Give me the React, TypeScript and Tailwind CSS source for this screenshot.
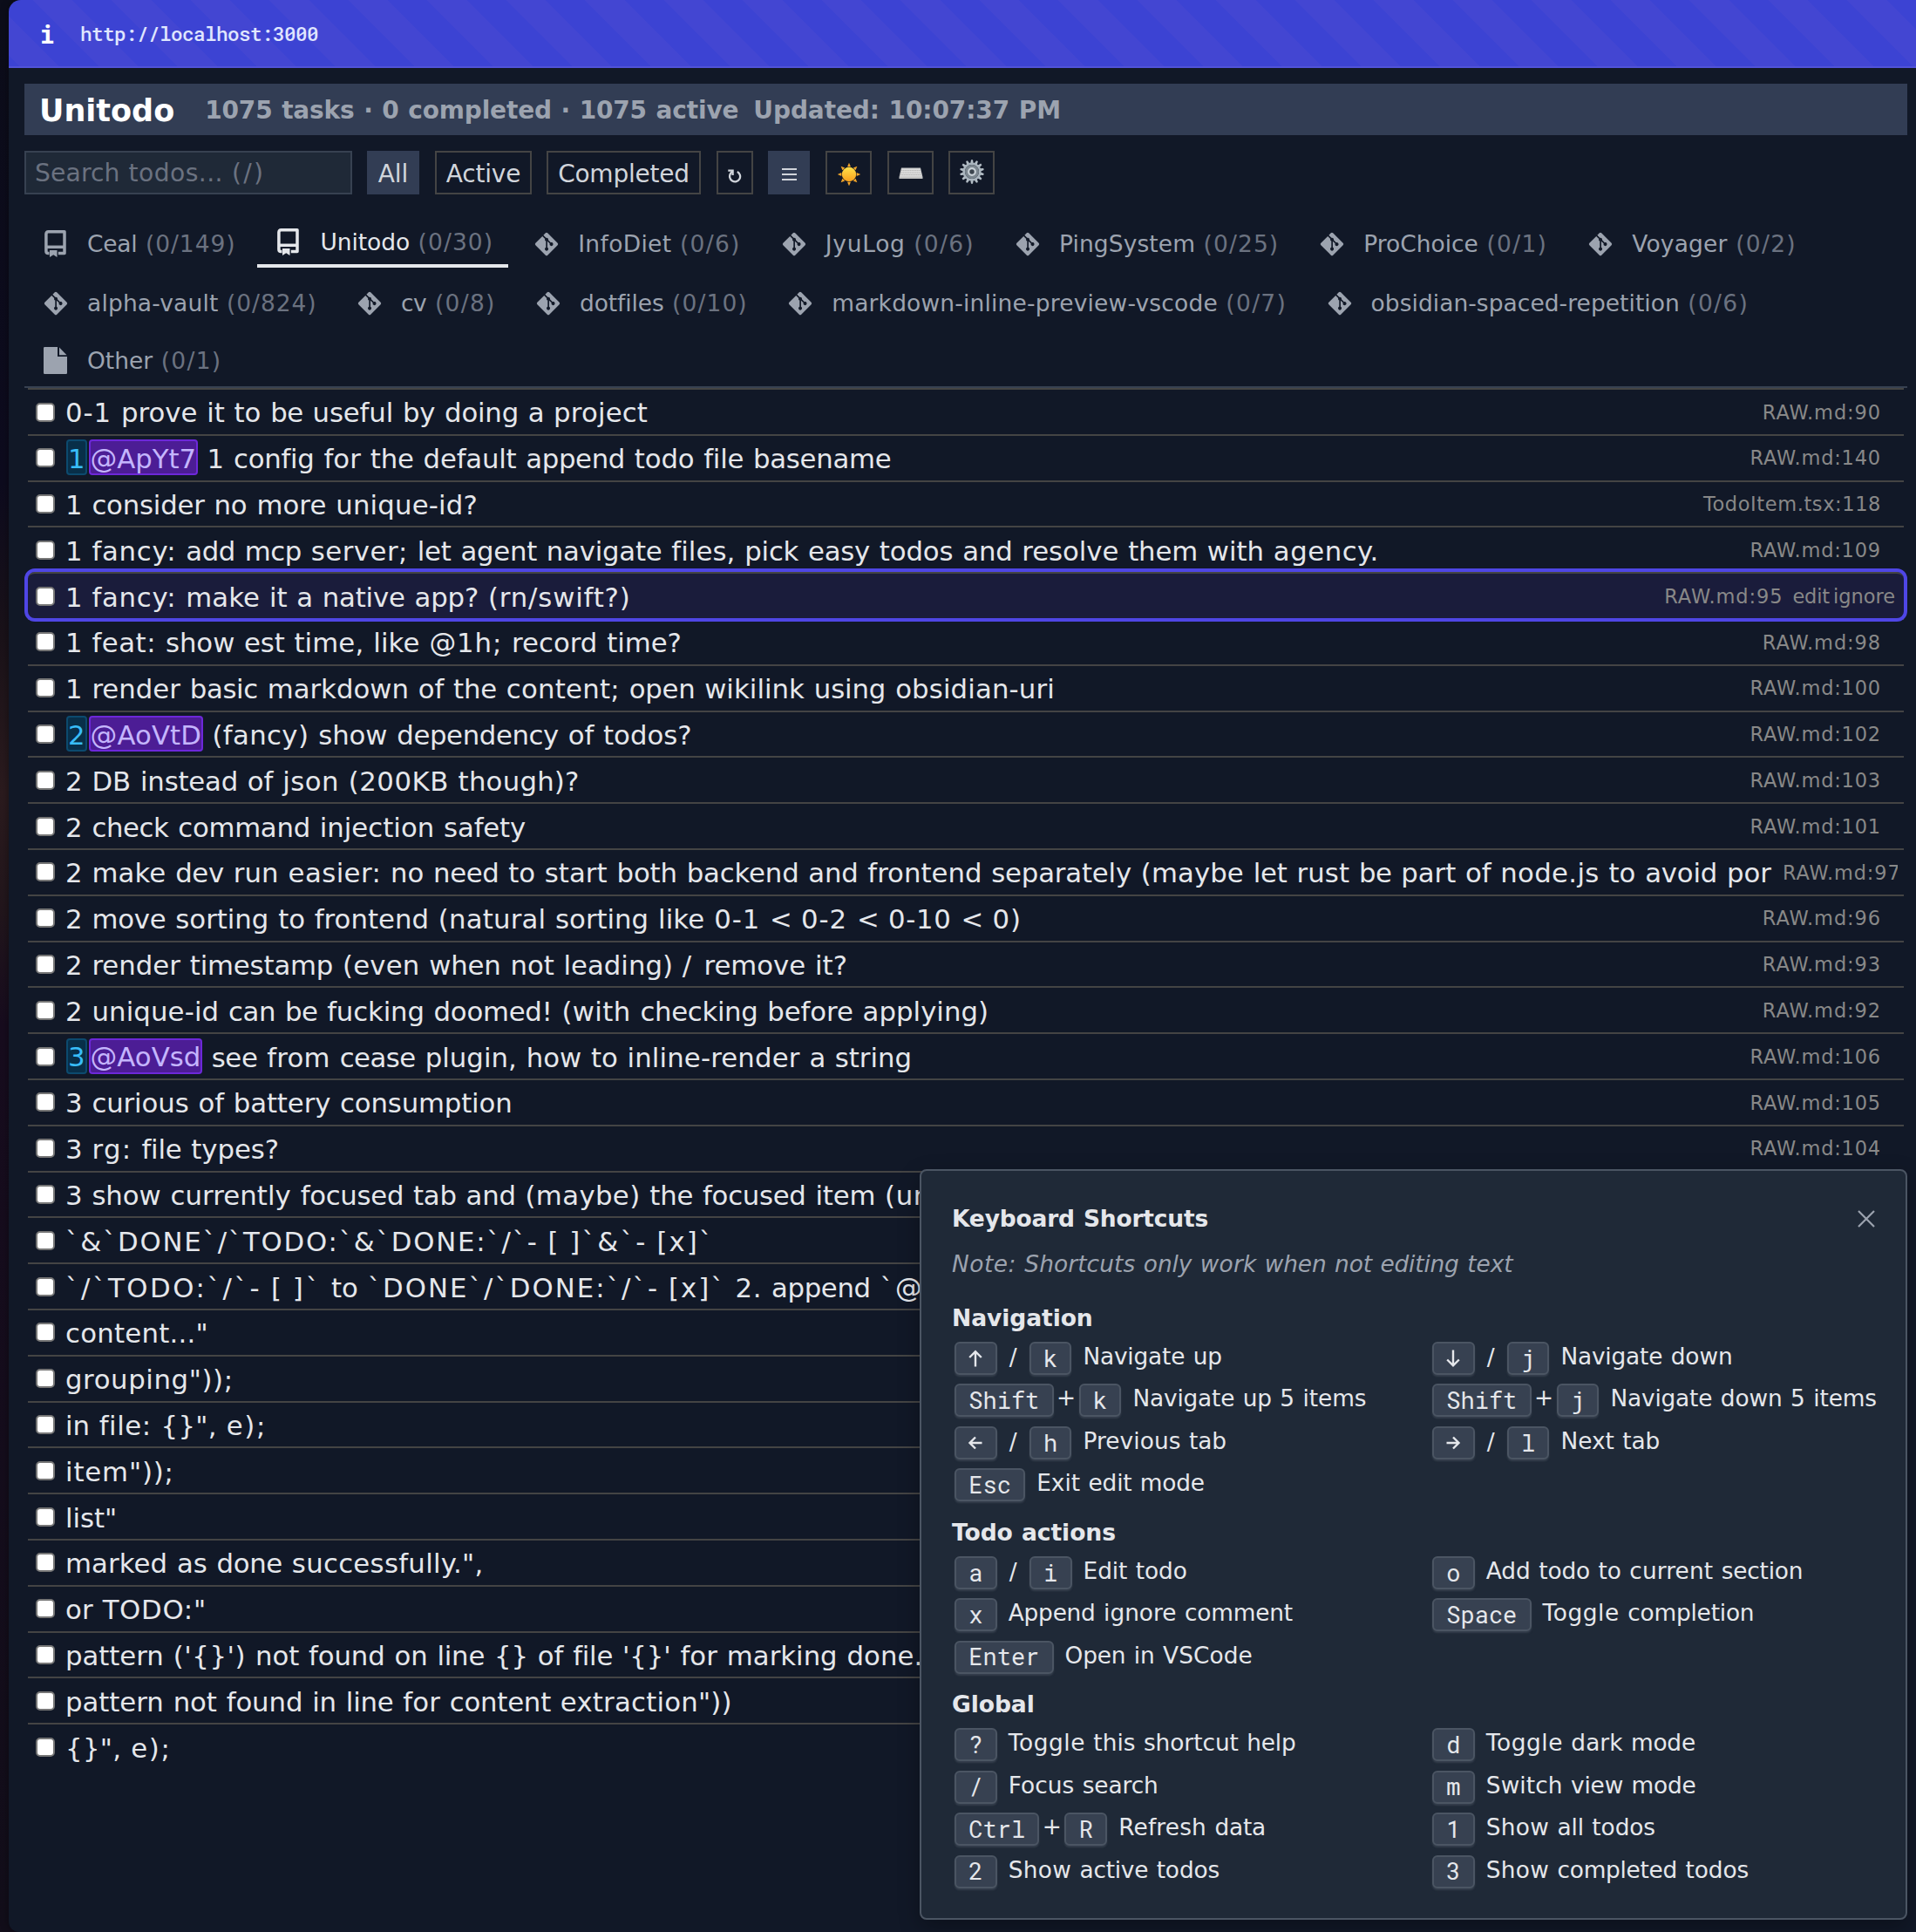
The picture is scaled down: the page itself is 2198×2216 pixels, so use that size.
import React, { useMemo } from "react";
import { FaGitAlt } from "react-icons/fa";

/** Advance widths of the interface face, in thousandths of an em. */
const ADV: Record<string, number> = {
  "!": 394, '"': 459, "&": 727, "'": 269, "(": 454, ")": 454, "+": 818, ",": 364, "-": 454, ".": 364, "/": 454,
  "0": 636, "1": 636, "2": 636, "3": 636, "4": 636, "5": 636, "6": 636, "7": 636, "8": 636, "9": 636,
  ":": 454, ";": 454, "<": 818, "?": 545, "@": 1000,
  A: 684, B: 686, C: 698, D: 771, E: 632, F: 575, G: 775, H: 751, I: 421, J: 455, K: 693, L: 557, M: 843,
  N: 748, O: 787, P: 603, Q: 787, R: 695, S: 684, T: 616, U: 732, V: 684, W: 989, X: 685, Y: 615, Z: 685,
  "[": 454, "]": 454, "`": 636,
  a: 601, b: 623, c: 521, d: 623, e: 596, f: 352, g: 623, h: 633, i: 274, j: 344, k: 592, l: 274, m: 973,
  n: 633, o: 607, p: 623, q: 623, r: 427, s: 521, t: 394, u: 633, v: 592, w: 818, x: 592, y: 592, z: 525,
  "{": 635, "}": 635,
};

let ctx: CanvasRenderingContext2D | null = null;
function fallbackWidth(word: string) {
  ctx = ctx ?? document.createElement("canvas").getContext("2d");
  if (!ctx) return 0;
  ctx.font = "100px 'DejaVu Sans'";
  return ctx.measureText(word).width / 100;
}

/** Text whose words keep the interface face's widths when the fallback face is in use. */
function Words({ children, className }: { children: string; className?: string }) {
  const parts = useMemo(
    () =>
      children.split(" ").map((word) => {
        const target = [...word].reduce((sum, ch) => sum + (ADV[ch] ?? 600), 0) / 1000;
        const spacing = word.length ? (target - fallbackWidth(word)) / word.length : 0;
        return { word, spacing: `${spacing.toFixed(4)}em` };
      }),
    [children],
  );
  return (
    <span className={className}>
      {parts.map((p, i) => (
        <React.Fragment key={i}>
          {i > 0 && " "}
          <span style={{ letterSpacing: p.spacing }}>{p.word}</span>
        </React.Fragment>
      ))}
    </span>
  );
}

type Todo = { text: string; loc?: string; prio?: string; id?: string; focused?: boolean; clipped?: boolean };

const todos: Todo[] = [
  { text: "0-1 prove it to be useful by doing a project", loc: "RAW.md:90" },
  { text: "1 config for the default append todo file basename", loc: "RAW.md:140", prio: "1", id: "@ApYt7" },
  { text: "1 consider no more unique-id?", loc: "TodoItem.tsx:118" },
  { text: "1 fancy: add mcp server; let agent navigate files, pick easy todos and resolve them with agency.", loc: "RAW.md:109" },
  { text: "1 fancy: make it a native app? (rn/swift?)", loc: "RAW.md:95", focused: true },
  { text: "1 feat: show est time, like @1h; record time?", loc: "RAW.md:98" },
  { text: "1 render basic markdown of the content; open wikilink using obsidian-uri", loc: "RAW.md:100" },
  { text: "(fancy) show dependency of todos?", loc: "RAW.md:102", prio: "2", id: "@AoVtD" },
  { text: "2 DB instead of json (200KB though)?", loc: "RAW.md:103" },
  { text: "2 check command injection safety", loc: "RAW.md:101" },
  { text: "2 make dev run easier: no need to start both backend and frontend separately (maybe let rust be part of node.js to avoid por", loc: "RAW.md:97", clipped: true },
  { text: "2 move sorting to frontend (natural sorting like 0-1 < 0-2 < 0-10 < 0)", loc: "RAW.md:96" },
  { text: "2 render timestamp (even when not leading) / remove it?", loc: "RAW.md:93" },
  { text: "2 unique-id can be fucking doomed! (with checking before applying)", loc: "RAW.md:92" },
  { text: "see from cease plugin, how to inline-render a string", loc: "RAW.md:106", prio: "3", id: "@AoVsd" },
  { text: "3 curious of battery consumption", loc: "RAW.md:105" },
  { text: "3 rg: file types?", loc: "RAW.md:104" },
  { text: "3 show currently focused tab and (maybe) the focused item (un" },
  { text: "`&`DONE`/`TODO:`&`DONE:`/`- [ ]`&`- [x]`" },
  { text: "`/`TODO:`/`- [ ]` to `DONE`/`DONE:`/`- [x]` 2. append `@" },
  { text: 'content..."' },
  { text: 'grouping"));' },
  { text: 'in file: {}", e);' },
  { text: 'item"));' },
  { text: 'list"' },
  { text: 'marked as done successfully.",' },
  { text: 'or TODO:"' },
  { text: "pattern ('{}') not found on line {} of file '{}' for marking done." },
  { text: 'pattern not found in line for content extraction"))' },
  { text: '{}", e);' },
];

type TabInfo = { name: string; count: string; icon: "repo" | "git" | "file"; active?: boolean };

const tabRows: TabInfo[][] = [
  [
    { name: "Ceal", count: "(0/149)", icon: "repo" },
    { name: "Unitodo", count: "(0/30)", icon: "repo", active: true },
    { name: "InfoDiet", count: "(0/6)", icon: "git" },
    { name: "JyuLog", count: "(0/6)", icon: "git" },
    { name: "PingSystem", count: "(0/25)", icon: "git" },
    { name: "ProChoice", count: "(0/1)", icon: "git" },
    { name: "Voyager", count: "(0/2)", icon: "git" },
  ],
  [
    { name: "alpha-vault", count: "(0/824)", icon: "git" },
    { name: "cv", count: "(0/8)", icon: "git" },
    { name: "dotfiles", count: "(0/10)", icon: "git" },
    { name: "markdown-inline-preview-vscode", count: "(0/7)", icon: "git" },
    { name: "obsidian-spaced-repetition", count: "(0/6)", icon: "git" },
  ],
  [{ name: "Other", count: "(0/1)", icon: "file" }],
];

function RepoIcon() {
  return (
    <svg viewBox="0 0 25 31" className="h-[31px] w-[25px]" fill="none" stroke="currentColor" strokeWidth="3.500">
      <path d="M5.500 26.600H4.500Q1.900 26.600 1.900 24V4.400Q1.900 1.800 4.500 1.800H23V26.600H15.800" strokeLinejoin="round" />
      <path d="M2 19.300H23" />
      <path d="M6 23H14.500V31L10.250 28.200L6 31Z" fill="currentColor" stroke="none" />
    </svg>
  );
}

function FileIcon() {
  return (
    <svg viewBox="0 0 27 31" className="h-[31px] w-[27px]" fill="currentColor">
      <path d="M1.200 0H16V11H27V29.800Q27 31 25.800 31H1.200Q0 31 0 29.800V1.200Q0 0 1.200 0Z" />
      <path d="M18 0.600L26.500 9.200H18Z" />
    </svg>
  );
}

function TabIcon({ kind }: { kind: TabInfo["icon"] }) {
  return (
    <span className="mr-[3px] flex w-[36px] justify-center">
      {kind === "repo" && <RepoIcon />}
      {kind === "git" && <FaGitAlt className="ml-[2px] size-[30px]" />}
      {kind === "file" && <FileIcon />}
    </span>
  );
}

function Tab({ tab }: { tab: TabInfo }) {
  return (
    <div
      className={
        tab.active
          ? "flex h-[55px] items-center gap-4 border-b-4 border-[#e5e7eb] px-[17px] text-[#e5e7eb]"
          : "flex h-[55px] items-center gap-4 px-[17px] text-[#9ca3af]"
      }
    >
      <TabIcon kind={tab.icon} />
      <span className="whitespace-nowrap">
        <Words>{tab.name}</Words> <Words className="text-[#6b7280]">{tab.count}</Words>
      </span>
    </div>
  );
}

function TodoRow({ todo }: { todo: Todo }) {
  return (
    <div
      className={
        todo.focused
          ? "relative z-10 flex h-[52.8px] items-start rounded-[8px] border-t-2 border-[#444] bg-[#1a1c3b] outline-4 outline-[#4f46e5]"
          : "flex h-[52.8px] items-start border-t-2 border-[#444]"
      }
    >
      <span className="mt-[14.500px] ml-[9px] size-[22px] shrink-0 rounded-[5px] border-2 border-[#767676] bg-white" />
      <div
        className={
          todo.clipped
            ? "ml-[12px] flex h-[50px] w-[1961px] shrink-0 items-center pt-[3px] whitespace-nowrap"
            : "ml-[12px] flex h-[50px] min-w-0 flex-1 items-center pt-[3px] whitespace-nowrap"
        }
      >
        {todo.id && (
          <>
            <span className="mb-[3px] ml-[1px] flex h-[41px] items-center rounded-[4px] border-2 border-[#0c4a6e] bg-[#082f49] pt-[2px] text-[#38bdf8]">{todo.prio}</span>
            <span className="mr-[10.500px] mb-[3px] ml-[2px] flex h-[41px] items-center rounded-[4px] border-2 border-[#6d28d9] bg-[#4c1d95] pt-[2px] text-[#c4b5fd]">
              <Words>{todo.id}</Words>
            </span>
          </>
        )}
        <Words>{todo.text}</Words>
      </div>
      {todo.loc && (
        <div
          className={
            todo.focused
              ? "flex h-[50px] items-center pt-[3px] pr-[10px] text-[22.500px] text-[#888]"
              : todo.clipped
                ? "mr-[7px] ml-[9px] flex h-[50px] min-w-0 flex-1 items-center overflow-hidden pt-[3px] text-[22.400px] text-[#888]"
                : "flex h-[50px] items-center pt-[3px] pr-[26px] text-[22.500px] text-[#888]"
          }
        >
          <Words>{todo.loc}</Words>
          {todo.focused && (
            <>
              <Words className="ml-[11px]">edit</Words>
              <Words className="ml-[4px]">ignore</Words>
            </>
          )}
        </div>
      )}
    </div>
  );
}

type Shortcut = { keys: string[]; sep?: string; label: string };
type Group = { title: string; items: Shortcut[] };

const groups: Group[] = [
  {
    title: "Navigation",
    items: [
      { keys: ["↑", "k"], sep: "/", label: "Navigate up" },
      { keys: ["↓", "j"], sep: "/", label: "Navigate down" },
      { keys: ["Shift", "k"], sep: "+", label: "Navigate up 5 items" },
      { keys: ["Shift", "j"], sep: "+", label: "Navigate down 5 items" },
      { keys: ["←", "h"], sep: "/", label: "Previous tab" },
      { keys: ["→", "l"], sep: "/", label: "Next tab" },
      { keys: ["Esc"], label: "Exit edit mode" },
    ],
  },
  {
    title: "Todo actions",
    items: [
      { keys: ["a", "i"], sep: "/", label: "Edit todo" },
      { keys: ["o"], label: "Add todo to current section" },
      { keys: ["x"], label: "Append ignore comment" },
      { keys: ["Space"], label: "Toggle completion" },
      { keys: ["Enter"], label: "Open in VSCode" },
    ],
  },
  {
    title: "Global",
    items: [
      { keys: ["?"], label: "Toggle this shortcut help" },
      { keys: ["d"], label: "Toggle dark mode" },
      { keys: ["/"], label: "Focus search" },
      { keys: ["m"], label: "Switch view mode" },
      { keys: ["Ctrl", "R"], sep: "+", label: "Refresh data" },
      { keys: ["1"], label: "Show all todos" },
      { keys: ["2"], label: "Show active todos" },
      { keys: ["3"], label: "Show completed todos" },
    ],
  },
];

const arrowPaths: Record<string, string> = {
  "↑": "M8 18.500V1M1.200 8L8 1.200L14.800 8",
  "↓": "M8 -0.500V17M1.200 10.500L8 17.300L14.800 10.500",
  "←": "M15.500 9H2M8 2.500L1.500 9L8 15.500",
  "→": "M.5 9H14M8 2.500L14.500 9L8 15.500",
};

function Key({ label }: { label: string }) {
  return (
    <span className="mx-[3px] mt-[5px] flex h-[38px] items-center rounded-[6px] border-2 border-[#4b5563] bg-[#374151] px-[14.300px] font-['Roboto_Mono','DejaVu_Sans_Mono',monospace] text-[27px] [word-spacing:0] shadow-[0_2px_2px_rgba(75,85,99,0.5)]">
      {arrowPaths[label] ? (
        <svg viewBox="0 0 16 18" className="h-[18px] w-[16px] overflow-visible" fill="none" stroke="currentColor" strokeWidth="2.400">
          <path d={arrowPaths[label]} />
        </svg>
      ) : (
        label
      )}
    </span>
  );
}

function ShortcutItem({ item }: { item: Shortcut }) {
  return (
    <div className="flex h-[48.400px] items-start whitespace-nowrap">
      <Key label={item.keys[0]} />
      {item.keys[1] && (
        <>
          <span className={item.sep === "/" ? "mt-[5px] w-[31px] text-center leading-[36px]" : "mt-[3px] w-[23px] text-center leading-[36px]"}>{item.sep}</span>
          <Key label={item.keys[1]} />
        </>
      )}
      <Words className="ml-[10px] leading-[43px]">{item.label}</Words>
    </div>
  );
}

function ShortcutsPanel() {
  return (
    <div className="absolute top-[1341px] left-[1055px] z-20 h-[861px] w-[1133px] rounded-[8px] border-2 border-[#4b5563] bg-[#1f2937] pr-[34px] pl-[35px] text-[26.400px] text-[#e5e7eb] shadow-[0_8px_24px_rgba(0,0,0,0.3)]">
      <div className="mt-[36px] flex h-[38px] items-center justify-between">
        <h2 className="text-[26.500px] font-bold tracking-[-0.2px]">Keyboard Shortcuts</h2>
        <svg viewBox="0 0 20 20" className="mr-[1px] size-[20px] text-[#9ca3af]" fill="none" stroke="currentColor" strokeWidth="2.200">
          <path d="M1 1l18 18M19 1L1 19" />
        </svg>
      </div>
      <p className="mt-[14px] h-[38px] leading-[38px] text-[#9ca3af] italic">
        <Words>Note: Shortcuts only work when not editing text</Words>
      </p>
      <div className="pt-[22px]">
        {groups.map((g) => (
          <section key={g.title} className="mb-[9.300px]">
            <h3 className="h-[43px] text-[26.600px] leading-[42px] font-bold tracking-[-0.1px]">{g.title}</h3>
            <div className="grid grid-cols-[548px_1fr]">
              {g.items.map((it) => (
                <ShortcutItem key={it.label} item={it} />
              ))}
            </div>
          </section>
        ))}
      </div>
    </div>
  );
}

function RefreshIcon() {
  return (
    <svg viewBox="0 0 16 16" className="size-[16px]" fill="none" stroke="currentColor" strokeWidth="2.300">
      <path d="M10.800 3A6 6 0 1 1 3 5.200L5.400 1.800" />
      <path d="M0.300 1.700H5.600V7" />
    </svg>
  );
}

function SunIcon() {
  return (
    <svg viewBox="0 0 28 28" className="size-[28px]">
      <g fill="#f3a52a">
        {[0, 45, 90, 135, 180, 225, 270, 315].map((a) => (
          <path key={a} d="M14 0.800L16 5.300H12Z" transform={`rotate(${a} 14 14)`} />
        ))}
      </g>
      <circle cx="14" cy="14" r="8.200" fill="url(#sun)" />
      <defs>
        <linearGradient id="sun" x1="0" y1="0" x2="0" y2="1">
          <stop offset="0" stopColor="#ffe14a" />
          <stop offset="1" stopColor="#f9a01b" />
        </linearGradient>
      </defs>
    </svg>
  );
}

function KeyboardIcon() {
  return (
    <svg viewBox="0 0 28 14" className="h-[14px] w-[28px]">
      <path d="M3 0.500H25L27.500 11V13H0.500V11Z" fill="#c4c4c4" />
      <path d="M3.500 1.500H24.500L26.300 10.500H1.700Z" fill="#dcdcdc" />
      <path d="M3 3.500H25M2.500 6H25.500M2 8.500H26" stroke="#b0b0b0" strokeWidth="0.8" strokeDasharray="1.500 0.5" />
    </svg>
  );
}

function GearIcon() {
  return (
    <svg viewBox="0 0 28 28" className="size-[28px]">
      <g fill="#b3bdc5">
        {Array.from({ length: 14 }, (_, i) => (
          <path key={i} d="M13 0.200H15L15.800 5H12.200Z" transform={`rotate(${(i * 360) / 14} 14 14)`} />
        ))}
      </g>
      <circle cx="14" cy="14" r="9.300" fill="none" stroke="#a9b4bd" strokeWidth="2.600" />
      <circle cx="14" cy="14" r="8" fill="#7b868f" />
      <circle cx="14" cy="14" r="3.800" fill="#3b444d" stroke="#c8d0d6" strokeWidth="2.200" />
    </svg>
  );
}

export default function App() {
  return (
    <div className="relative h-[2216px] w-[2198px] overflow-hidden bg-[linear-gradient(180deg,#0c0d1a_0%,#0d0b1e_25%,#1a1219_33%,#2b1b1e_41%,#22161c_47%,#170c1e_53%,#120e1a_100%)] pl-[10px] font-['DejaVu_Sans',sans-serif] text-[30.750px] text-[#e5e7eb] [word-spacing:0.034em]">
      <div className="h-full overflow-hidden rounded-tl-[14px] rounded-bl-[12px] bg-[#111827] shadow-[0_0_10px_rgba(0,0,0,0.4)]">
        <div className="flex h-[78px] items-center border-b-2 border-[#5153d8] bg-[repeating-linear-gradient(45deg,#3c43d3_0px,#3c43d3_9px,#4346d2_9px,#4346d2_41px,#3c43d3_41px,#3c43d3_64px)] font-['Roboto_Mono','DejaVu_Sans_Mono',monospace] text-[22.700px] font-medium text-indigo-100 [word-spacing:0]">
          <span className="ml-[35px] text-[30px] font-bold text-white">i</span>
          <span className="ml-[29px] tracking-[-0.62px]">http://localhost:3000</span>
        </div>
        <div className="pt-[18px] pr-[10px] pl-[18px]">
          <header className="flex h-[59px] items-center bg-[#323d54] pt-[3px] pl-[17px] font-bold whitespace-nowrap">
            <h1 className="text-[35px] text-white">Unitodo</h1>
            <span className="ml-[35px] text-[28px] tracking-[-0.16px] text-[#9ca3af]">1075 tasks · 0 completed · 1075 active</span>
            <span className="ml-[17px] text-[28px] tracking-[-0.1px] text-[#9ca3af]">Updated: 10:07:37 PM</span>
          </header>
          <div className="mt-[18px] flex h-[50px] items-stretch text-[28px] text-[#d1d5db]">
            <div className="flex w-[376px] items-center border-2 border-[#374151] bg-[#1f2937] pt-[3px] pl-[10px] text-[28.200px] text-[#6b7280]">
              <Words>Search todos... (/)</Words>
            </div>
            <button className="ml-[17px] flex w-[60px] items-center justify-center bg-[#323d54] pt-[3px]"><Words>All</Words></button>
            <button className="ml-[18px] flex w-[111px] items-center justify-center border-2 border-[#444] pt-[3px]"><Words>Active</Words></button>
            <button className="ml-[17px] flex w-[177px] items-center justify-center border-2 border-[#444] pt-[3px]"><Words>Completed</Words></button>
            <button className="ml-[18px] flex w-[42px] items-center justify-center border-2 border-[#444] pt-[7px]"><RefreshIcon /></button>
            <button className="ml-[17px] flex w-[48px] flex-col items-center justify-center gap-[4px] bg-[#323d54] pt-[4px]">
              <span className="h-[2px] w-[17px] bg-[#d1d5db]" />
              <span className="h-[2px] w-[17px] bg-[#d1d5db]" />
              <span className="h-[2px] w-[17px] bg-[#d1d5db]" />
            </button>
            <button className="ml-[18px] flex w-[53px] items-center justify-center border-2 border-[#444] pt-[3px]"><SunIcon /></button>
            <button className="ml-[18px] flex w-[53px] items-center justify-center border-2 border-[#444] pt-[1px]"><KeyboardIcon /></button>
            <button className="ml-[17px] flex w-[53px] items-center justify-center border-2 border-[#444] pb-[2px]"><GearIcon /></button>
          </div>
          <nav className="mt-[29px] h-[193px] border-b-2 border-[#374151] text-[26.500px]">
            {tabRows.map((row, i) => (
              <div key={i} className={i === 0 ? "flex h-[68px] gap-2" : i === 1 ? "flex h-[66px] gap-[7.400px]" : "flex h-[57px] gap-2"}>
                {row.map((t) => (
                  <Tab key={t.name} tab={t} />
                ))}
              </div>
            ))}
          </nav>
          <main className="pr-[4px] pl-[4px]">
            {todos.map((t, i) => (
              <TodoRow key={i} todo={t} />
            ))}
          </main>
        </div>
      </div>
      <ShortcutsPanel />
    </div>
  );
}
